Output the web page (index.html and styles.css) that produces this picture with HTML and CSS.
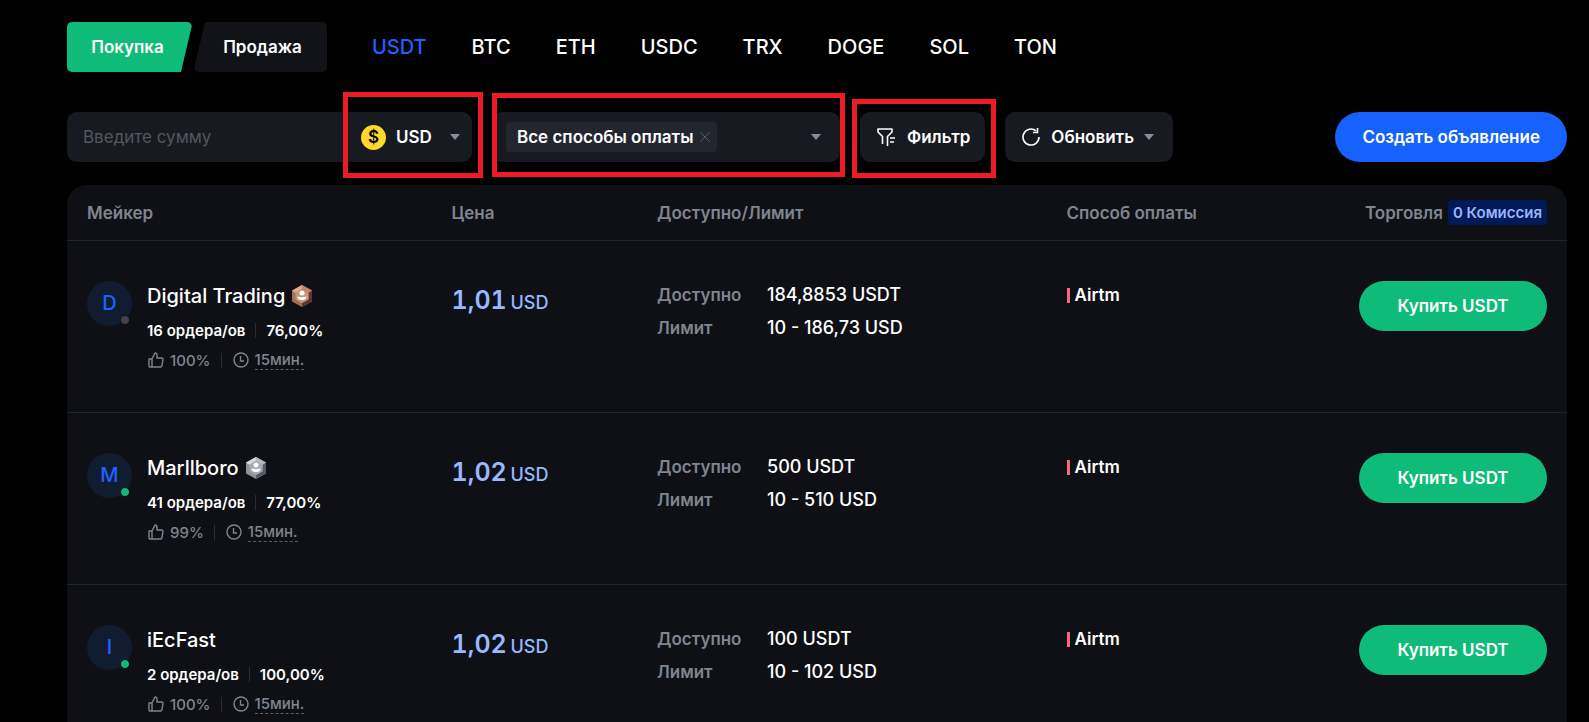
FILE: index.html
```html
<!DOCTYPE html>
<html lang="ru">
<head>
  <meta charset="UTF-8">
  <meta name="viewport" content="width=device-width, initial-scale=1">
  <title>P2P Торговля</title>
  <link rel="stylesheet" href="styles.css">
</head>
<body>

  <!-- shared icons -->
  <svg class="sprite" aria-hidden="true">
    <symbol id="caret" viewBox="0 0 10 6"><path d="M0 0h10L5 6z" fill="currentColor"/></symbol>
    <symbol id="like" viewBox="0 0 16 16"><path d="M1 7h3v8H2.200Q1 15 1 13.800zM4 7l3-6q2 0 2 2v3h4.500q1.500 0 1.500 1.500l-1 6q-.3 1.500-1.800 1.500H4" fill="none" stroke="currentColor" stroke-width="1.400" stroke-linejoin="round"/></symbol>
    <symbol id="clock" viewBox="0 0 16 16"><circle cx="8" cy="8" r="7" fill="none" stroke="currentColor" stroke-width="1.400"/><path d="M7.500 4v5H11" fill="none" stroke="currentColor" stroke-width="1.400"/></symbol>
  </svg>

  <nav class="top">
    <div class="sides">
      <button class="side buy">Покупка</button>
      <button class="side sell">Продажа</button>
    </div>
    <div class="coins">
      <a href="#usdt" class="active">USDT</a>
      <a href="#btc">BTC</a>
      <a href="#eth">ETH</a>
      <a href="#usdc">USDC</a>
      <a href="#trx">TRX</a>
      <a href="#doge">DOGE</a>
      <a href="#sol">SOL</a>
      <a href="#ton">TON</a>
    </div>
  </nav>

  <div class="filters">
    <div class="box amount">
      <input type="text" placeholder="Введите сумму" aria-label="Введите сумму">
      <div class="currency">
        <span class="dollar">$</span>
        <select aria-label="Валюта">
          <option>USD</option>
        </select>
        <svg class="caret"><use href="#caret"/></svg>
        <span class="mark mark-currency"></span>
      </div>
    </div>

    <div class="box methods">
      <span class="chip">Все способы оплаты
        <button class="remove" aria-label="Убрать">
          <svg width="10" height="10" viewBox="0 0 10 10"><path d="M.5.5l9 9M9.500.5l-9 9" stroke="currentColor"/></svg>
        </button>
      </span>
      <button class="open" aria-label="Способы оплаты"><svg class="caret"><use href="#caret"/></svg></button>
      <span class="mark mark-methods"></span>
    </div>

    <button class="box filter">
      <svg width="18" height="18" viewBox="0 0 18 18" fill="none" stroke="currentColor" stroke-width="1.600" stroke-linejoin="round"><path d="M5.500 16V8.500L1 4V1h14v3l-4.500 4.500V18M13 10h5M13 14h4"/></svg>
      Фильтр
      <span class="mark mark-filter"></span>
    </button>

    <button class="box refresh">
      <svg width="18" height="18" viewBox="0 0 18 18" fill="none" stroke="currentColor" stroke-width="1.600"><path d="M17 9a8 8 0 1 1-3-6.200M15.500 0v4.500H11"/></svg>
      Обновить
      <svg class="caret"><use href="#caret"/></svg>
    </button>

    <button class="create">Создать объявление</button>
  </div>

  <table class="offers">
    <thead>
      <tr>
        <th class="c-maker">Мейкер</th>
        <th class="c-price">Цена</th>
        <th class="c-limit">Доступно/Лимит</th>
        <th>Способ оплаты</th>
        <th class="c-trade"><div class="trade">Торговля <span class="fee">0 Комиссия</span></div></th>
      </tr>
    </thead>
    <tbody>
      <tr>
        <td>
          <div class="maker">
            <div class="avatar">D<span class="dot off"></span></div>
            <div>
              <div class="name">Digital Trading
                <svg width="20" height="22" viewBox="0 0 20 22"><path d="M10 0l10 5.500v11L10 22 0 16.500v-11z" fill="#a86f56"/><path d="M10 0v4L3.500 8 0 5.500z" fill="#e0a88a"/><path d="M10 0l10 5.500L16.500 8 10 4z" fill="#c48668"/><path d="M20 5.500v11L10 22v-4l6.500-4V8z" fill="#60352a"/><path d="M10 4l6.500 4v6.500L10 18l-6.500-3.500V8z" fill="#c9977e"/><circle cx="10" cy="8" r="2.500" fill="#fff"/><path d="M5.500 11.500q4.500 1.500 9 0 0 3.500-4.500 3.500t-4.500-3.500z" fill="#fff"/></svg>
              </div>
              <div class="orders"><span>16 ордера/ов</span><span class="sep"></span><span>76,00%</span></div>
              <div class="stats"><svg><use href="#like"/></svg><span>100%</span><span class="sep"></span><svg><use href="#clock"/></svg><span class="time">15мин.</span></div>
            </div>
          </div>
        </td>
        <td><div class="price">1,01 <small>USD</small></div></td>
        <td>
          <dl>
            <dt>Доступно</dt><dd>184,8853 USDT</dd>
            <dt>Лимит</dt><dd>10 - 186,73 USD</dd>
          </dl>
        </td>
        <td><div class="pay">Airtm</div></td>
        <td class="c-trade"><button class="buy-btn">Купить USDT</button></td>
      </tr>
      <tr>
        <td>
          <div class="maker">
            <div class="avatar">M<span class="dot"></span></div>
            <div>
              <div class="name">Marllboro
                <svg width="20" height="22" viewBox="0 0 20 22"><path d="M10 0l10 5.500v11L10 22 0 16.500v-11z" fill="#8d929b"/><path d="M10 0v4L3.500 8 0 5.500z" fill="#d5d8de"/><path d="M10 0l10 5.500L16.500 8 10 4z" fill="#b4b8c0"/><path d="M20 5.500v11L10 22v-4l6.500-4V8z" fill="#555b66"/><path d="M10 4l6.500 4v6.500L10 18l-6.500-3.500V8z" fill="#a4a9b2"/><circle cx="10" cy="8" r="2.500" fill="#fff"/><path d="M5.500 11.500q4.500 1.500 9 0 0 3.500-4.500 3.500t-4.500-3.500z" fill="#fff"/></svg>
              </div>
              <div class="orders"><span>41 ордера/ов</span><span class="sep"></span><span>77,00%</span></div>
              <div class="stats"><svg><use href="#like"/></svg><span>99%</span><span class="sep"></span><svg><use href="#clock"/></svg><span class="time">15мин.</span></div>
            </div>
          </div>
        </td>
        <td><div class="price">1,02 <small>USD</small></div></td>
        <td>
          <dl>
            <dt>Доступно</dt><dd>500 USDT</dd>
            <dt>Лимит</dt><dd>10 - 510 USD</dd>
          </dl>
        </td>
        <td><div class="pay">Airtm</div></td>
        <td class="c-trade"><button class="buy-btn">Купить USDT</button></td>
      </tr>
      <tr>
        <td>
          <div class="maker">
            <div class="avatar">I<span class="dot"></span></div>
            <div>
              <div class="name">iEcFast</div>
              <div class="orders"><span>2 ордера/ов</span><span class="sep"></span><span>100,00%</span></div>
              <div class="stats"><svg><use href="#like"/></svg><span>100%</span><span class="sep"></span><svg><use href="#clock"/></svg><span class="time">15мин.</span></div>
            </div>
          </div>
        </td>
        <td><div class="price">1,02 <small>USD</small></div></td>
        <td>
          <dl>
            <dt>Доступно</dt><dd>100 USDT</dd>
            <dt>Лимит</dt><dd>10 - 102 USD</dd>
          </dl>
        </td>
        <td><div class="pay">Airtm</div></td>
        <td class="c-trade"><button class="buy-btn">Купить USDT</button></td>
      </tr>
    </tbody>
  </table>

</body>
</html>
```
FILE: styles.css
```css
* {
  box-sizing: border-box;
}
html {
  background: #000;
  scrollbar-width: none;
}
body {
  margin: 0;
  padding: 22px 22px 0 67px;
  background: #000;
  color: #fff;
  font-family: Inter, sans-serif;
  font-size: 17px;
  font-weight: 600;
}
button, input, select {
  font: inherit;
  color: inherit;
  border: none;
  background: none;
  padding: 0;
  margin: 0;
}
button {
  cursor: pointer;
}
.sprite {
  display: none;
}
.caret {
  width: 10px;
  height: 6px;
  flex: none;
  color: #878d99;
  pointer-events: none;
}

/* buy / sell and coins */
.top {
  display: flex;
  align-items: center;
}
.sides {
  display: flex;
  gap: 2px;
}
.side {
  height: 50px;
  border-radius: 5px;
}
.buy {
  width: 125px;
  padding-right: 4px;
  background: #0ebb78;
  clip-path: polygon(0 0, calc(100% - 2px) 0, 100% 3px, calc(100% - 11px) 100%, 0 100%);
}
.sell {
  width: 133px;
  padding-left: 4px;
  background: #121319;
  clip-path: polygon(11px 0, 100% 0, 100% 100%, 2px 100%, 0 calc(100% - 3px));
}
.coins {
  display: flex;
  gap: 45px;
  margin-left: 45px;
  font-size: 20px;
  font-weight: 500;
}
.coins a {
  color: #fff;
  text-decoration: none;
}
.coins .active {
  color: #1e62ff;
}

/* filters row */
.filters {
  display: flex;
  gap: 20px;
  margin: 40px 0 23px;
}
.box {
  position: relative;
  display: flex;
  align-items: center;
  height: 50px;
  border-radius: 10px;
  background: #181a21;
}
.amount {
  width: 405px;
}
.amount input {
  flex: 1;
  min-width: 0;
  height: 100%;
  padding: 0 16px;
  font-weight: 400;
  outline: none;
}
.amount input::placeholder {
  color: #53565e;
  opacity: 1;
}
.currency {
  position: relative;
  display: flex;
  align-items: center;
  height: 100%;
  padding: 0 12px 0 18px;
}
.dollar {
  width: 25px;
  height: 25px;
  margin-right: 10px;
  border-radius: 50%;
  background: #ffd82e;
  color: #000;
  line-height: 25px;
  text-align: center;
}
.currency select {
  width: 54px;
  appearance: none;
  outline: none;
}
.methods {
  width: 348px;
  padding: 0 19px 0 14px;
  justify-content: space-between;
}
.chip {
  display: flex;
  align-items: center;
  gap: 6px;
  height: 30px;
  padding: 0 7px 0 11px;
  border-radius: 4px;
  background: #23262f;
  white-space: nowrap;
}
.remove {
  display: flex;
  color: #5a5e68;
}
.open {
  display: flex;
}
.filter {
  padding: 0 15px 0 17px;
  gap: 12px;
}
.refresh {
  padding: 0 19px 0 17px;
  gap: 11px;
}
.refresh .caret {
  margin-left: -1px;
}
.create {
  height: 50px;
  margin-left: auto;
  padding: 0 27px;
  border-radius: 25px;
  background: #1662ff;
}

/* red frames around the controls */
.mark {
  position: absolute;
  border: 5px solid #ec1c24;
  pointer-events: none;
}
.mark-currency {
  inset: -20px -11px -16px 0;
}
.mark-methods {
  inset: -19px -5px -15px 0;
}
.mark-filter {
  inset: -13px -11px -16px -8px;
}

/* offers */
.offers {
  width: 100%;
  table-layout: fixed;
  border-collapse: separate;
  border-spacing: 0;
  border-radius: 20px 20px 0 0;
  background: #0f1015;
}
.offers th {
  height: 56px;
  padding: 0 0 0 20px;
  border-bottom: 1px solid #23252c;
  color: #7f8591;
  font-weight: 600;
  text-align: left;
}
.offers td {
  height: 172px;
  padding: 40px 0 0 20px;
  border-bottom: 1px solid #23252c;
  vertical-align: top;
}
.offers .c-maker {
  width: 24.3%;
}
.offers .c-price {
  width: 13.7%;
}
.offers .c-limit {
  width: 27.3%;
}
.offers .c-trade {
  padding-right: 20px;
  text-align: right;
}
.trade {
  display: flex;
  align-items: center;
  justify-content: flex-end;
  gap: 5px;
}
.fee {
  padding: 0 5px;
  border-radius: 4px;
  background: #001a57;
  color: #97b6ff;
  font-size: 15px;
  line-height: 25px;
}
.maker {
  display: flex;
  gap: 15px;
}
.avatar {
  position: relative;
  flex: none;
  width: 45px;
  height: 45px;
  border-radius: 50%;
  background: #111c31;
  color: #1e62ff;
  font-size: 20px;
  font-weight: 500;
  line-height: 45px;
  text-align: center;
}
.dot {
  position: absolute;
  right: 2px;
  bottom: 1px;
  width: 10px;
  height: 10px;
  border: 1px solid #0f1015;
  border-radius: 50%;
  background: #0ebb78;
}
.dot.off {
  background: #43454b;
}
.name {
  display: flex;
  align-items: center;
  gap: 7px;
  height: 30px;
  font-size: 20px;
  font-weight: 500;
}
.orders, .stats {
  display: flex;
  align-items: center;
  height: 30px;
  font-size: 15px;
}
.orders {
  margin-top: 4px;
}
.sep {
  width: 1px;
  height: 15px;
  margin: 0 10px;
  background: #2b2d34;
}
.stats {
  color: #7f8591;
  font-weight: 500;
}
.stats svg {
  width: 16px;
  height: 16px;
  margin: 0 6px 0 1px;
}
.time {
  border-bottom: 1px dashed #5a5e68;
}
.price {
  color: #98b8ff;
  font-size: 25px;
  font-variant-numeric: tabular-nums;
  line-height: 38px;
}
.price small {
  margin-left: -3px;
  font-size: 18px;
  font-weight: 500;
}
dl {
  display: grid;
  grid-template-columns: 90px 1fr;
  gap: 5px 20px;
  margin: 0;
  line-height: 28px;
}
dt {
  color: #7f8591;
}
dd {
  margin: 0;
  font-size: 18px;
  font-weight: 500;
}
.pay {
  display: flex;
  align-items: center;
  gap: 5px;
  height: 28px;
}
.pay::before {
  content: "";
  width: 3px;
  height: 15px;
  background: #f56a79;
}
.buy-btn {
  width: 188px;
  height: 50px;
  border-radius: 25px;
  background: #0ebb78;
}
```
